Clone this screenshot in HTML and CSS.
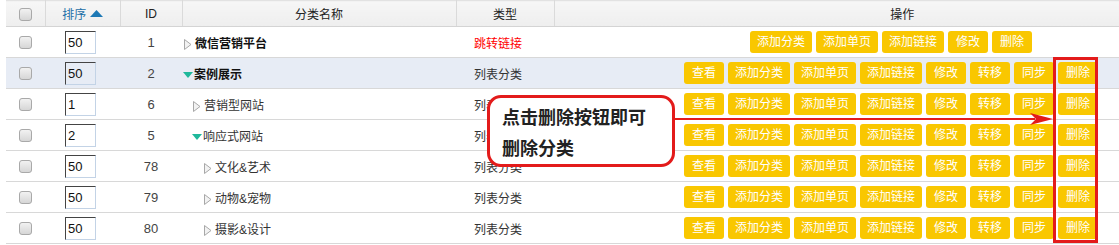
FILE: index.html
```html
<!DOCTYPE html>
<html lang="zh-cn">
<head>
  <meta charset="UTF-8">
  <title>分类管理</title>
  <link rel="stylesheet" href="styles.css">
</head>
<body>
  <div class="page">
    <table class="cat-table">
      <colgroup>
        <col class="c-chk"><col class="c-sort"><col class="c-id"><col class="c-name"><col class="c-type"><col class="c-ops">
      </colgroup>
      <thead>
        <tr>
          <th><span class="chk"></span></th>
          <th class="sort">排序 <svg width="13" height="7" viewBox="0 0 13 7"><polygon points="6.5,0 13,7 0,7" fill="#1d78b5"/></svg></th>
          <th>ID</th>
          <th>分类名称</th>
          <th>类型</th>
          <th class="ops-head">操作</th>
        </tr>
      </thead>
      <tbody>
        <tr>
          <td class="center"><span class="chk"></span></td>
          <td class="sort-cell"><input class="sort-input" type="text" value="50"></td>
          <td class="center id">1</td>
          <td class="name lv1"><span class="icon"><svg width="8" height="11" viewBox="0 0 8 11"><polygon points="0.5,0.5 7,5.5 0.5,10.5" fill="#f2f2f2" stroke="#a8a8a8"/></svg></span><b>微信营销平台</b></td>
          <td class="type red">跳转链接</td>
          <td class="ops-cell">
            <div class="ops">
              <span class="btn">添加分类</span><span class="btn">添加单页</span><span class="btn">添加链接</span><span class="btn">修改</span><span class="btn">删除</span>
            </div>
          </td>
        </tr>
        <tr class="active">
          <td class="center"><span class="chk"></span></td>
          <td class="sort-cell"><input class="sort-input" type="text" value="50"></td>
          <td class="center id">2</td>
          <td class="name lv1x"><span class="icon"><svg width="10" height="6" viewBox="0 0 10 6"><polygon points="0,0 10,0 5,6" fill="#1fb89b"/></svg></span><b>案例展示</b></td>
          <td class="type">列表分类</td>
          <td class="ops-cell">
            <div class="ops">
              <span class="btn">查看</span><span class="btn">添加分类</span><span class="btn">添加单页</span><span class="btn">添加链接</span><span class="btn">修改</span><span class="btn">转移</span><span class="btn">同步</span><span class="btn">删除</span>
            </div>
          </td>
        </tr>
        <tr>
          <td class="center"><span class="chk"></span></td>
          <td class="sort-cell"><input class="sort-input" type="text" value="1"></td>
          <td class="center id">6</td>
          <td class="name lv2"><span class="icon"><svg width="8" height="11" viewBox="0 0 8 11"><polygon points="0.5,0.5 7,5.5 0.5,10.5" fill="#f2f2f2" stroke="#a8a8a8"/></svg></span>营销型网站</td>
          <td class="type">列表分类</td>
          <td class="ops-cell">
            <div class="ops">
              <span class="btn">查看</span><span class="btn">添加分类</span><span class="btn">添加单页</span><span class="btn">添加链接</span><span class="btn">修改</span><span class="btn">转移</span><span class="btn">同步</span><span class="btn">删除</span>
            </div>
          </td>
        </tr>
        <tr>
          <td class="center"><span class="chk"></span></td>
          <td class="sort-cell"><input class="sort-input" type="text" value="2"></td>
          <td class="center id">5</td>
          <td class="name lv2x"><span class="icon"><svg width="10" height="6" viewBox="0 0 10 6"><polygon points="0,0 10,0 5,6" fill="#1fb89b"/></svg></span>响应式网站</td>
          <td class="type">列表分类</td>
          <td class="ops-cell">
            <div class="ops">
              <span class="btn">查看</span><span class="btn">添加分类</span><span class="btn">添加单页</span><span class="btn">添加链接</span><span class="btn">修改</span><span class="btn">转移</span><span class="btn">同步</span><span class="btn">删除</span>
            </div>
          </td>
        </tr>
        <tr>
          <td class="center"><span class="chk"></span></td>
          <td class="sort-cell"><input class="sort-input" type="text" value="50"></td>
          <td class="center id">78</td>
          <td class="name lv3"><span class="icon"><svg width="8" height="11" viewBox="0 0 8 11"><polygon points="0.5,0.5 7,5.5 0.5,10.5" fill="#f2f2f2" stroke="#a8a8a8"/></svg></span>文化&amp;艺术</td>
          <td class="type">列表分类</td>
          <td class="ops-cell">
            <div class="ops">
              <span class="btn">查看</span><span class="btn">添加分类</span><span class="btn">添加单页</span><span class="btn">添加链接</span><span class="btn">修改</span><span class="btn">转移</span><span class="btn">同步</span><span class="btn">删除</span>
            </div>
          </td>
        </tr>
        <tr>
          <td class="center"><span class="chk"></span></td>
          <td class="sort-cell"><input class="sort-input" type="text" value="50"></td>
          <td class="center id">79</td>
          <td class="name lv3"><span class="icon"><svg width="8" height="11" viewBox="0 0 8 11"><polygon points="0.5,0.5 7,5.5 0.5,10.5" fill="#f2f2f2" stroke="#a8a8a8"/></svg></span>动物&amp;宠物</td>
          <td class="type">列表分类</td>
          <td class="ops-cell">
            <div class="ops">
              <span class="btn">查看</span><span class="btn">添加分类</span><span class="btn">添加单页</span><span class="btn">添加链接</span><span class="btn">修改</span><span class="btn">转移</span><span class="btn">同步</span><span class="btn">删除</span>
            </div>
          </td>
        </tr>
        <tr>
          <td class="center"><span class="chk"></span></td>
          <td class="sort-cell"><input class="sort-input" type="text" value="50"></td>
          <td class="center id">80</td>
          <td class="name lv3"><span class="icon"><svg width="8" height="11" viewBox="0 0 8 11"><polygon points="0.5,0.5 7,5.5 0.5,10.5" fill="#f2f2f2" stroke="#a8a8a8"/></svg></span>摄影&amp;设计</td>
          <td class="type">列表分类</td>
          <td class="ops-cell">
            <div class="ops">
              <span class="btn">查看</span><span class="btn">添加分类</span><span class="btn">添加单页</span><span class="btn">添加链接</span><span class="btn">修改</span><span class="btn">转移</span><span class="btn">同步</span><span class="btn">删除</span>
            </div>
          </td>
        </tr>
      </tbody>
    </table>

    <!-- annotation overlay -->
    <div class="note">点击删除按钮即可<br>删除分类</div>
    <svg class="note-arrow" width="380" height="14" viewBox="0 0 380 14">
      <line x1="0" y1="7" x2="360" y2="7" stroke="#e31b1b" stroke-width="2"/>
      <polygon points="355,1 378,7 355,13 361,7" fill="#e31b1b"/>
    </svg>
    <div class="note-frame"></div>
  </div>
</body>
</html>
```

FILE: styles.css
```css
html, body {
  margin: 0;
}

body {
  font-family: "Liberation Sans", "Noto Sans CJK SC", sans-serif;
  font-size: 12px;
  color: #333;
  background: #fff;
}

.page {
  position: relative;
  padding-left: 6px;
}

.cat-table {
  width: 1113px;
  border-collapse: collapse;
  table-layout: fixed;
}

.c-chk { width: 39px; }
.c-sort { width: 75px; }
.c-id { width: 62px; }
.c-name { width: 274px; }
.c-type { width: 98px; }
.c-ops { width: 565px; }

.cat-table th {
  height: 25px;
  padding: 0;
  background: linear-gradient(#f6f6f6, #eeeeee);
  border-top: 1px solid #e2e2e2;
  border-bottom: 1px solid #d4d4d4;
  border-right: 1px solid #dadada;
  font-weight: normal;
  color: #222;
  text-align: center;
}

.cat-table th:last-child {
  border-right: none;
}

.cat-table th.sort {
  color: #1d6fa8;
}

.cat-table th.sort svg {
  vertical-align: 2px;
}

.cat-table th.ops-head {
  padding-left: 131px;
}

.cat-table td {
  height: 30px;
  padding: 0;
  border-bottom: 1px solid #d8d8d8;
}

.cat-table td.ops-cell {
  padding-left: 109px;
}

.cat-table tr.active td {
  background: #e7ecf5;
}

.center {
  text-align: center;
}

.chk {
  display: inline-block;
  width: 11px;
  height: 11px;
  border: 1px solid #a9a9a9;
  border-radius: 3px;
  background: linear-gradient(#f2f2f2, #d6d6d6);
  vertical-align: middle;
}

.sort-cell {
  padding-left: 20px !important;
}

.sort-input {
  display: block;
  box-sizing: border-box;
  width: 31px;
  height: 23px;
  margin: 0;
  padding: 0 0 0 2px;
  font-family: "Liberation Sans", sans-serif;
  font-size: 13px;
  color: #111;
  background: transparent;
  border-top: 1px solid #444;
  border-left: 1px solid #444;
  border-right: 1px solid #c3d3e6;
  border-bottom: 1px solid #c3d3e6;
  outline: none;
}

.id {
  color: #444;
  font-size: 13px;
}

.name {
  color: #333;
  white-space: nowrap;
}

.name b {
  color: #111;
}

.name .icon {
  display: inline-block;
  width: 11px;
  vertical-align: middle;
}

.name .icon svg {
  display: block;
}

.lv1 { padding-left: 2px !important; }
.lv1x { padding-left: 1px !important; }
.lv2 { padding-left: 11px !important; }
.lv2x { padding-left: 10px !important; }
.lv3 { padding-left: 22px !important; }

.type {
  padding-left: 18px !important;
}

.red {
  color: #f00;
}

.ops {
  display: flex;
  justify-content: center;
  gap: 4px;
}

.btn {
  display: inline-block;
  min-width: 26px;
  height: 22px;
  line-height: 22px;
  padding: 0 7px;
  background: #f9c700;
  color: #fff;
  border-radius: 3px;
  text-align: center;
  white-space: nowrap;
}

.note {
  position: absolute;
  left: 487px;
  top: 95px;
  width: 158px;
  padding: 3px 12px 1px;
  border: 3px solid #e31b1b;
  border-radius: 14px;
  background: #fff;
  font-family: "Noto Sans CJK SC", sans-serif;
  font-size: 18px;
  font-weight: bold;
  line-height: 31px;
  color: #222;
}

.note-arrow {
  position: absolute;
  left: 675px;
  top: 112px;
}

.note-frame {
  position: absolute;
  left: 1053px;
  top: 57px;
  width: 39px;
  height: 180px;
  border: 3px solid #e31b1b;
}
```
